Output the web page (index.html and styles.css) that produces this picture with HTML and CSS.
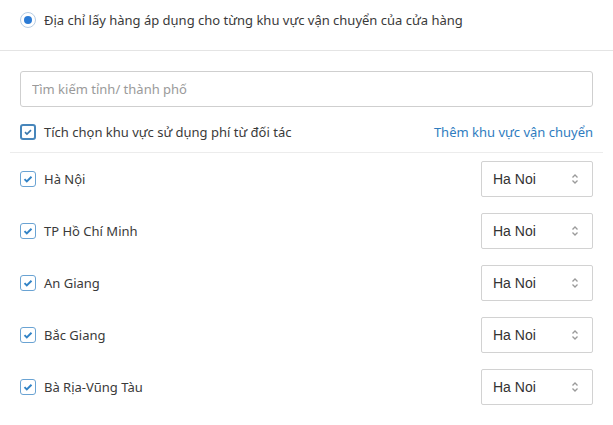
FILE: index.html
```html
<!DOCTYPE html>
<html lang="vi">
<head>
  <meta charset="UTF-8">
  <title>Khu vực vận chuyển</title>
  <meta name="viewport" content="width=device-width, initial-scale=1">
  <link rel="stylesheet" href="styles.css">
</head>
<body>

<div class="top">
  <label class="radio">
    <span class="radio-dot"></span>
    Địa chỉ lấy hàng áp dụng cho từng khu vực vận chuyển của cửa hàng
  </label>
</div>

<div class="panel">
  <input class="search" type="text" placeholder="Tìm kiếm tỉnh/ thành phố">

  <div class="head-row">
    <label class="check check-main">
      <span class="box"><svg viewBox="0 0 16 16"><path d="M4 8.2l2.6 2.6L12 5.4"/></svg></span>
      Tích chọn khu vực sử dụng phí từ đối tác
    </label>
    <a class="link" href="#">Thêm khu vực vận chuyển</a>
  </div>

  <div class="list">
    <div class="row">
      <label class="check">
        <span class="box"><svg viewBox="0 0 16 16"><path d="M4 8.2l2.6 2.6L12 5.4"/></svg></span>
        Hà Nội
      </label>
      <div class="select">Ha Noi <svg class="arrows" viewBox="0 0 8 12"><path d="M1.5 4.5L4 2l2.5 2.5M1.5 7.5L4 10l2.5-2.5"/></svg></div>
    </div>
    <div class="row">
      <label class="check">
        <span class="box"><svg viewBox="0 0 16 16"><path d="M4 8.2l2.6 2.6L12 5.4"/></svg></span>
        TP Hồ Chí Minh
      </label>
      <div class="select">Ha Noi <svg class="arrows" viewBox="0 0 8 12"><path d="M1.5 4.5L4 2l2.5 2.5M1.5 7.5L4 10l2.5-2.5"/></svg></div>
    </div>
    <div class="row">
      <label class="check">
        <span class="box"><svg viewBox="0 0 16 16"><path d="M4 8.2l2.6 2.6L12 5.4"/></svg></span>
        An Giang
      </label>
      <div class="select">Ha Noi <svg class="arrows" viewBox="0 0 8 12"><path d="M1.5 4.5L4 2l2.5 2.5M1.5 7.5L4 10l2.5-2.5"/></svg></div>
    </div>
    <div class="row">
      <label class="check">
        <span class="box"><svg viewBox="0 0 16 16"><path d="M4 8.2l2.6 2.6L12 5.4"/></svg></span>
        Bắc Giang
      </label>
      <div class="select">Ha Noi <svg class="arrows" viewBox="0 0 8 12"><path d="M1.5 4.5L4 2l2.5 2.5M1.5 7.5L4 10l2.5-2.5"/></svg></div>
    </div>
    <div class="row">
      <label class="check">
        <span class="box"><svg viewBox="0 0 16 16"><path d="M4 8.2l2.6 2.6L12 5.4"/></svg></span>
        Bà Rịa-Vũng Tàu
      </label>
      <div class="select">Ha Noi <svg class="arrows" viewBox="0 0 8 12"><path d="M1.5 4.5L4 2l2.5 2.5M1.5 7.5L4 10l2.5-2.5"/></svg></div>
    </div>
  </div>
</div>

</body>
</html>
```

FILE: styles.css
```css
body {
  margin: 0;
  font-family: 'Noto Sans', 'Open Sans', sans-serif;
  font-size: 13px;
  color: #3a3a3a;
  background: #fff;
}

.top {
  height: 51px;
  padding: 0 20px 10px;
  display: flex;
  align-items: center;
  border-bottom: 1px solid #e4e4e4;
  box-sizing: border-box;
}

.radio {
  display: flex;
  align-items: center;
  gap: 8px;
}

.radio-dot {
  width: 14px;
  height: 14px;
  border: 1px solid #b7cde4;
  border-radius: 50%;
  position: relative;
  flex: none;
}

.radio-dot::after {
  content: "";
  position: absolute;
  left: 3px;
  top: 3px;
  width: 8px;
  height: 8px;
  border-radius: 50%;
  background: #2b7bd5;
}

.panel {
  padding: 20px 20px 0;
}

.search {
  display: block;
  width: 100%;
  height: 36px;
  box-sizing: border-box;
  border: 1px solid #cfcfcf;
  border-radius: 3px;
  padding: 0 11px;
  font: inherit;
  color: #333;
}

.search::placeholder {
  color: #9a9a9a;
}

.head-row {
  display: flex;
  align-items: center;
  justify-content: space-between;
  height: 46px;
  margin: 0 -10px;
  padding: 5px 10px 0;
  box-sizing: border-box;
  border-bottom: 1px solid #ececec;
}

.check {
  display: flex;
  align-items: center;
  gap: 8px;
}

.box {
  width: 14px;
  height: 14px;
  border: 1px solid #6aa3d3;
  border-radius: 3px;
  flex: none;
  display: flex;
}

.box svg {
  width: 14px;
  height: 14px;
  fill: none;
  stroke: #3283c6;
  stroke-width: 2.2;
}

.check-main .box {
  width: 12px;
  height: 12px;
  border: 2px solid #4786bb;
}

.check-main .box svg {
  width: 12px;
  height: 12px;
  stroke: #3a78ad;
}

.link {
  color: #2f7cc0;
  text-decoration: none;
}

.list {
  padding-top: 8px;
}

.row {
  display: flex;
  align-items: center;
  justify-content: space-between;
  height: 36px;
  margin-bottom: 16px;
}

.select {
  width: 112px;
  height: 36px;
  box-sizing: border-box;
  border: 1px solid #d2d2d2;
  border-radius: 2px;
  padding: 0 11px;
  display: flex;
  align-items: center;
  justify-content: space-between;
  font-family: 'Liberation Sans', Arial, sans-serif;
  font-size: 14px;
  color: #333;
}

.arrows {
  width: 8px;
  height: 12px;
  fill: none;
  stroke: #9a9a9a;
  stroke-width: 1.3;
  margin-right: 2px;
}
```
